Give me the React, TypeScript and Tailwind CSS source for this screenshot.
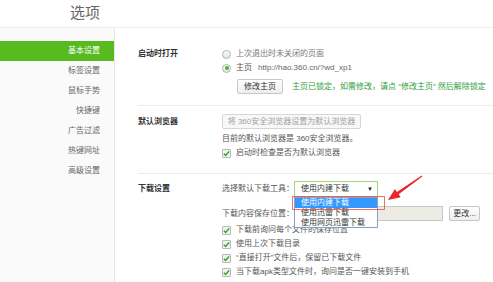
const FONT = "font-['Liberation_Sans','Noto_Sans_CJK_SC',sans-serif]";

const navItems = ["基本设置", "标签设置", "鼠标手势", "快捷键", "广告过滤", "热键网址", "高级设置"];

function Radio({ checked }: { checked?: boolean }) {
  return (
    <span className="flex h-[9px] w-[9px] shrink-0 items-center justify-center rounded-full border border-[#b3b3b3] bg-gradient-to-b from-[#fafafa] to-[#e4e4e4]">
      {checked && <span className="h-[4px] w-[4px] rounded-full bg-[#3cb63c]" />}
    </span>
  );
}

function Check() {
  return (
    <span className="flex h-[9px] w-[9px] shrink-0 items-center justify-center rounded-[1px] border border-[#b8b8b8] bg-[#f2f2f2]">
      <svg width="7" height="7" viewBox="0 0 8 8">
        <path d="M1 4.2 L3.1 6.3 L7 1.6" fill="none" stroke="#2aa52a" strokeWidth="1.7" />
      </svg>
    </span>
  );
}

function CheckRow({ children }: { children: React.ReactNode }) {
  return (
    <div className="flex h-[14px] items-center gap-[5px] whitespace-nowrap">
      <Check />
      <span>{children}</span>
    </div>
  );
}

export default function App() {
  return (
    <div className={`relative h-[282px] w-[493px] overflow-hidden bg-white text-[8px] text-[#555] ${FONT}`}>
      {/* title */}
      <div className="flex h-[28px] items-center border-b border-[#ececec] pl-[70px] pb-[2px]">
        <span className="text-[15px] leading-none text-[#666]">选项</span>
      </div>

      <div className="flex h-[254px]">
        {/* sidebar */}
        <div className="w-[115px] shrink-0 border-r border-[#e6e6e6] bg-[#fafafa] pt-[13px]">
          {navItems.map((item, i) => (
            <div
              key={item}
              className={
                i === 0
                  ? "flex h-[20px] items-center justify-end bg-[#57bb1f] pr-[14px] text-white"
                  : "flex h-[20px] items-center justify-end pr-[14px] text-[#666]"
              }
            >
              {item}
            </div>
          ))}
        </div>

        {/* content */}
        <div className="flex-1 pl-[23px]">
          {/* startup */}
          <div className="flex pt-[19px] pb-[11px]">
            <div className="flex h-[14px] w-[84px] shrink-0 items-center font-bold text-[#333]">启动时打开</div>
            <div>
              <div className="flex h-[14px] items-center gap-[5px]">
                <Radio />
                <span className="text-[#777]">上次退出时未关闭的页面</span>
              </div>
              <div className="flex h-[14px] items-center gap-[5px]">
                <Radio checked />
                <span>主页</span>
                <span className="ml-[1px] text-[#666]">http://hao.360.cn/?wd_xp1</span>
              </div>
              <div className="mt-[4px] flex items-center pl-[15px]">
                <button className="h-[15px] w-[46px] rounded-[2px] border border-[#c8c8c8] bg-gradient-to-b from-white to-[#eeeeee] text-[8px] text-[#333]">
                  修改主页
                </button>
                <span className="ml-[9px] whitespace-nowrap text-[#2f9e3a]">
                  主页已锁定，如需修改，请点 “修改主页” 然后解除锁定
                </span>
              </div>
            </div>
          </div>

          {/* default browser */}
          <div className="flex border-t border-[#ececec] pt-[8px] pb-[13px]">
            <div className="flex h-[15px] w-[84px] shrink-0 items-center font-bold text-[#333]">默认浏览器</div>
            <div>
              <button className="h-[15px] w-[139px] rounded-[2px] border border-[#d6d6d6] bg-[#f8f8f8] text-[8px] text-[#a0a0a0]">
                将 360安全浏览器设置为默认浏览器
              </button>
              <div className="mt-[3px] flex h-[14px] items-center">目前的默认浏览器是 360安全浏览器。</div>
              <CheckRow>启动时检查是否为默认浏览器</CheckRow>
            </div>
          </div>

          {/* downloads */}
          <div className="flex border-t border-[#ececec] pt-[7px]">
            <div className="flex h-[16px] w-[84px] shrink-0 items-center font-bold text-[#333]">下载设置</div>
            <div>
              <div className="flex h-[16px] items-center">
                <span className="w-[72px] shrink-0 whitespace-nowrap">选择默认下载工具：</span>
                <div className="relative">
                  <div className="flex h-[16px] w-[84px] items-center justify-between border border-[#a3d578] bg-white pl-[6px] pr-[4px] text-[#333]">
                    <span>使用内建下载</span>
                    <span className="text-[6px] text-[#222]">▼</span>
                  </div>
                  <div className="absolute left-0 top-[16px] z-10 w-[84px] border border-[#8a9fc4] bg-white text-[#333]">
                    <div className="flex h-[10px] items-center bg-[#3399ff] pl-[6px] text-white">使用内建下载</div>
                    <div className="flex h-[10px] items-center pl-[6px]">使用迅雷下载</div>
                    <div className="flex h-[9px] items-center pl-[6px]">使用网页迅雷下载</div>
                  </div>
                  <div className="absolute left-[-2px] top-[15px] z-20 h-[14px] w-[93px] border-[1.5px] border-[#ea4a4f]/80" />
                </div>
              </div>
              <div className="mt-[9px] flex h-[15px] items-center">
                <span className="w-[74px] shrink-0 whitespace-nowrap">下载内容保存位置：</span>
                <div className="h-[15px] w-[147px] border border-[#c9c9c4] bg-[#ecebe4]" />
                <button className="ml-[6px] h-[15px] w-[31px] rounded-[2px] border border-[#c6c6c6] bg-gradient-to-b from-white to-[#eeeeee] text-[8px] text-[#333]">
                  更改...
                </button>
              </div>
              <div className="mt-[2px]">
                <CheckRow>下载前询问每个文件的保存位置</CheckRow>
                <CheckRow>使用上次下载目录</CheckRow>
                <CheckRow>“直接打开”文件后，保留已下载文件</CheckRow>
                <CheckRow>当下载apk类型文件时，询问是否一键安装到手机</CheckRow>
              </div>
            </div>
          </div>
        </div>
      </div>

      {/* annotation arrow */}
      <svg className="pointer-events-none absolute left-0 top-0 z-30" width="493" height="282">
        <polygon
          points="388,200 394.9,189 396.9,191.9 421.7,175.6 422.3,176.4 398.7,194.3 400.7,197.2"
          fill="#e8262b"
        />
      </svg>
    </div>
  );
}
